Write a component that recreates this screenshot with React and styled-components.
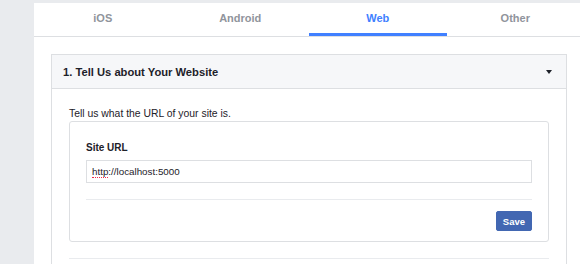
import React from 'react';
import styled, { createGlobalStyle } from 'styled-components';

const GlobalStyle = createGlobalStyle`
    html, body {
        margin: 0;
        padding: 0;
        background: #e9ebee;
        overflow: hidden;
    }
    body {
        font-family: "Liberation Sans", Arial, Helvetica, sans-serif;
        font-size: 11px;
        color: #1d2129;
    }
`;

const Page = styled.div`
    padding: 3px 0 0 34px;
`;

const Panel = styled.div`
    width: 550px;
    min-height: 280px;
    background: #fff;
`;

const TabBar = styled.div`
    display: flex;
    border-bottom: 1px solid #dddfe2;
`;

const Tab = styled.div`
    flex: 1;
    height: 33px;
    box-sizing: border-box;
    display: flex;
    align-items: center;
    justify-content: center;
    font-weight: bold;
    font-size: 11px;
    color: ${p => (p.$active ? '#4080ff' : '#90949c')};
    border-bottom: 3px solid ${p => (p.$active ? '#4080ff' : 'transparent')};
    cursor: pointer;
`;

const Content = styled.div`
    padding: 17px;
`;

const Accordion = styled.div`
    border: 1px solid #dddfe2;
    border-bottom: none;
`;

const AccordionHeader = styled.div`
    height: 33px;
    display: flex;
    align-items: center;
    justify-content: space-between;
    padding: 0 14px 0 11px;
    background: #f6f7f9;
    border-bottom: 1px solid #dddfe2;
    font-weight: bold;
    font-size: 11.2px;
    color: #1d2129;
`;

const Caret = styled.span`
    width: 0;
    height: 0;
    border-left: 3px solid transparent;
    border-right: 3px solid transparent;
    border-top: 4px solid #1d2129;
`;

const AccordionBody = styled.div`
    padding: 17px 17px 0;
`;

const Description = styled.div`
    font-size: 10.4px;
    line-height: 15px;
    color: #1d2129;
`;

const Card = styled.div`
    border: 1px solid #dddfe2;
    border-radius: 3px;
    padding: 18px 16px 10px;
`;

const Label = styled.div`
    font-weight: bold;
    font-size: 10px;
    line-height: 15px;
    color: #1d2129;
    margin-bottom: 5px;
`;

const UrlField = styled.div`
    height: 23px;
    box-sizing: border-box;
    border: 1px solid #dddfe2;
    display: flex;
    align-items: center;
    padding: 0 5px;
    font-size: 9.8px;
    color: #1d2129;
`;

// spell-check squiggle under "http"
const Misspelled = styled.span`
    line-height: 11px;
    border-bottom: 1px dotted #f02849;
`;

const Divider = styled.div`
    height: 1px;
    background: #e9ebee;
    margin: 16px 0 11px;
`;

const Footer = styled.div`
    display: flex;
    justify-content: flex-end;
`;

const Button = styled.button`
    height: 20px;
    padding: 0 6px;
    font-family: inherit;
    font-size: 9.5px;
    font-weight: bold;
    color: #fff;
    background: #4267b2;
    border: 1px solid #4267b2;
    border-radius: 2px;
    cursor: pointer;
`;

const NextSection = styled.div`
    margin-top: 16px;
    border-top: 1px solid #e9ebee;
    height: 10px;
`;

const tabs = ['iOS', 'Android', 'Web', 'Other'];

const App = () => {
    const [active, setActive] = React.useState('Web');
    return (<>
        <GlobalStyle />
        <Page>
            <Panel>
                <TabBar>
                    {tabs.map(t => (
                        <Tab key={t} $active={t === active} onClick={() => setActive(t)}>{t}</Tab>
                    ))}
                </TabBar>
                <Content>
                    <Accordion>
                        <AccordionHeader>
                            <span>1. Tell Us about Your Website</span>
                            <Caret />
                        </AccordionHeader>
                        <AccordionBody>
                            <Description>Tell us what the URL of your site is.</Description>
                            <Card>
                                <Label>Site URL</Label>
                                <UrlField role="textbox"><Misspelled>http</Misspelled>://localhost:5000</UrlField>
                                <Divider />
                                <Footer>
                                    <Button>Save</Button>
                                </Footer>
                            </Card>
                            <NextSection />
                        </AccordionBody>
                    </Accordion>
                </Content>
            </Panel>
        </Page>
    </>);
};

export default App;
